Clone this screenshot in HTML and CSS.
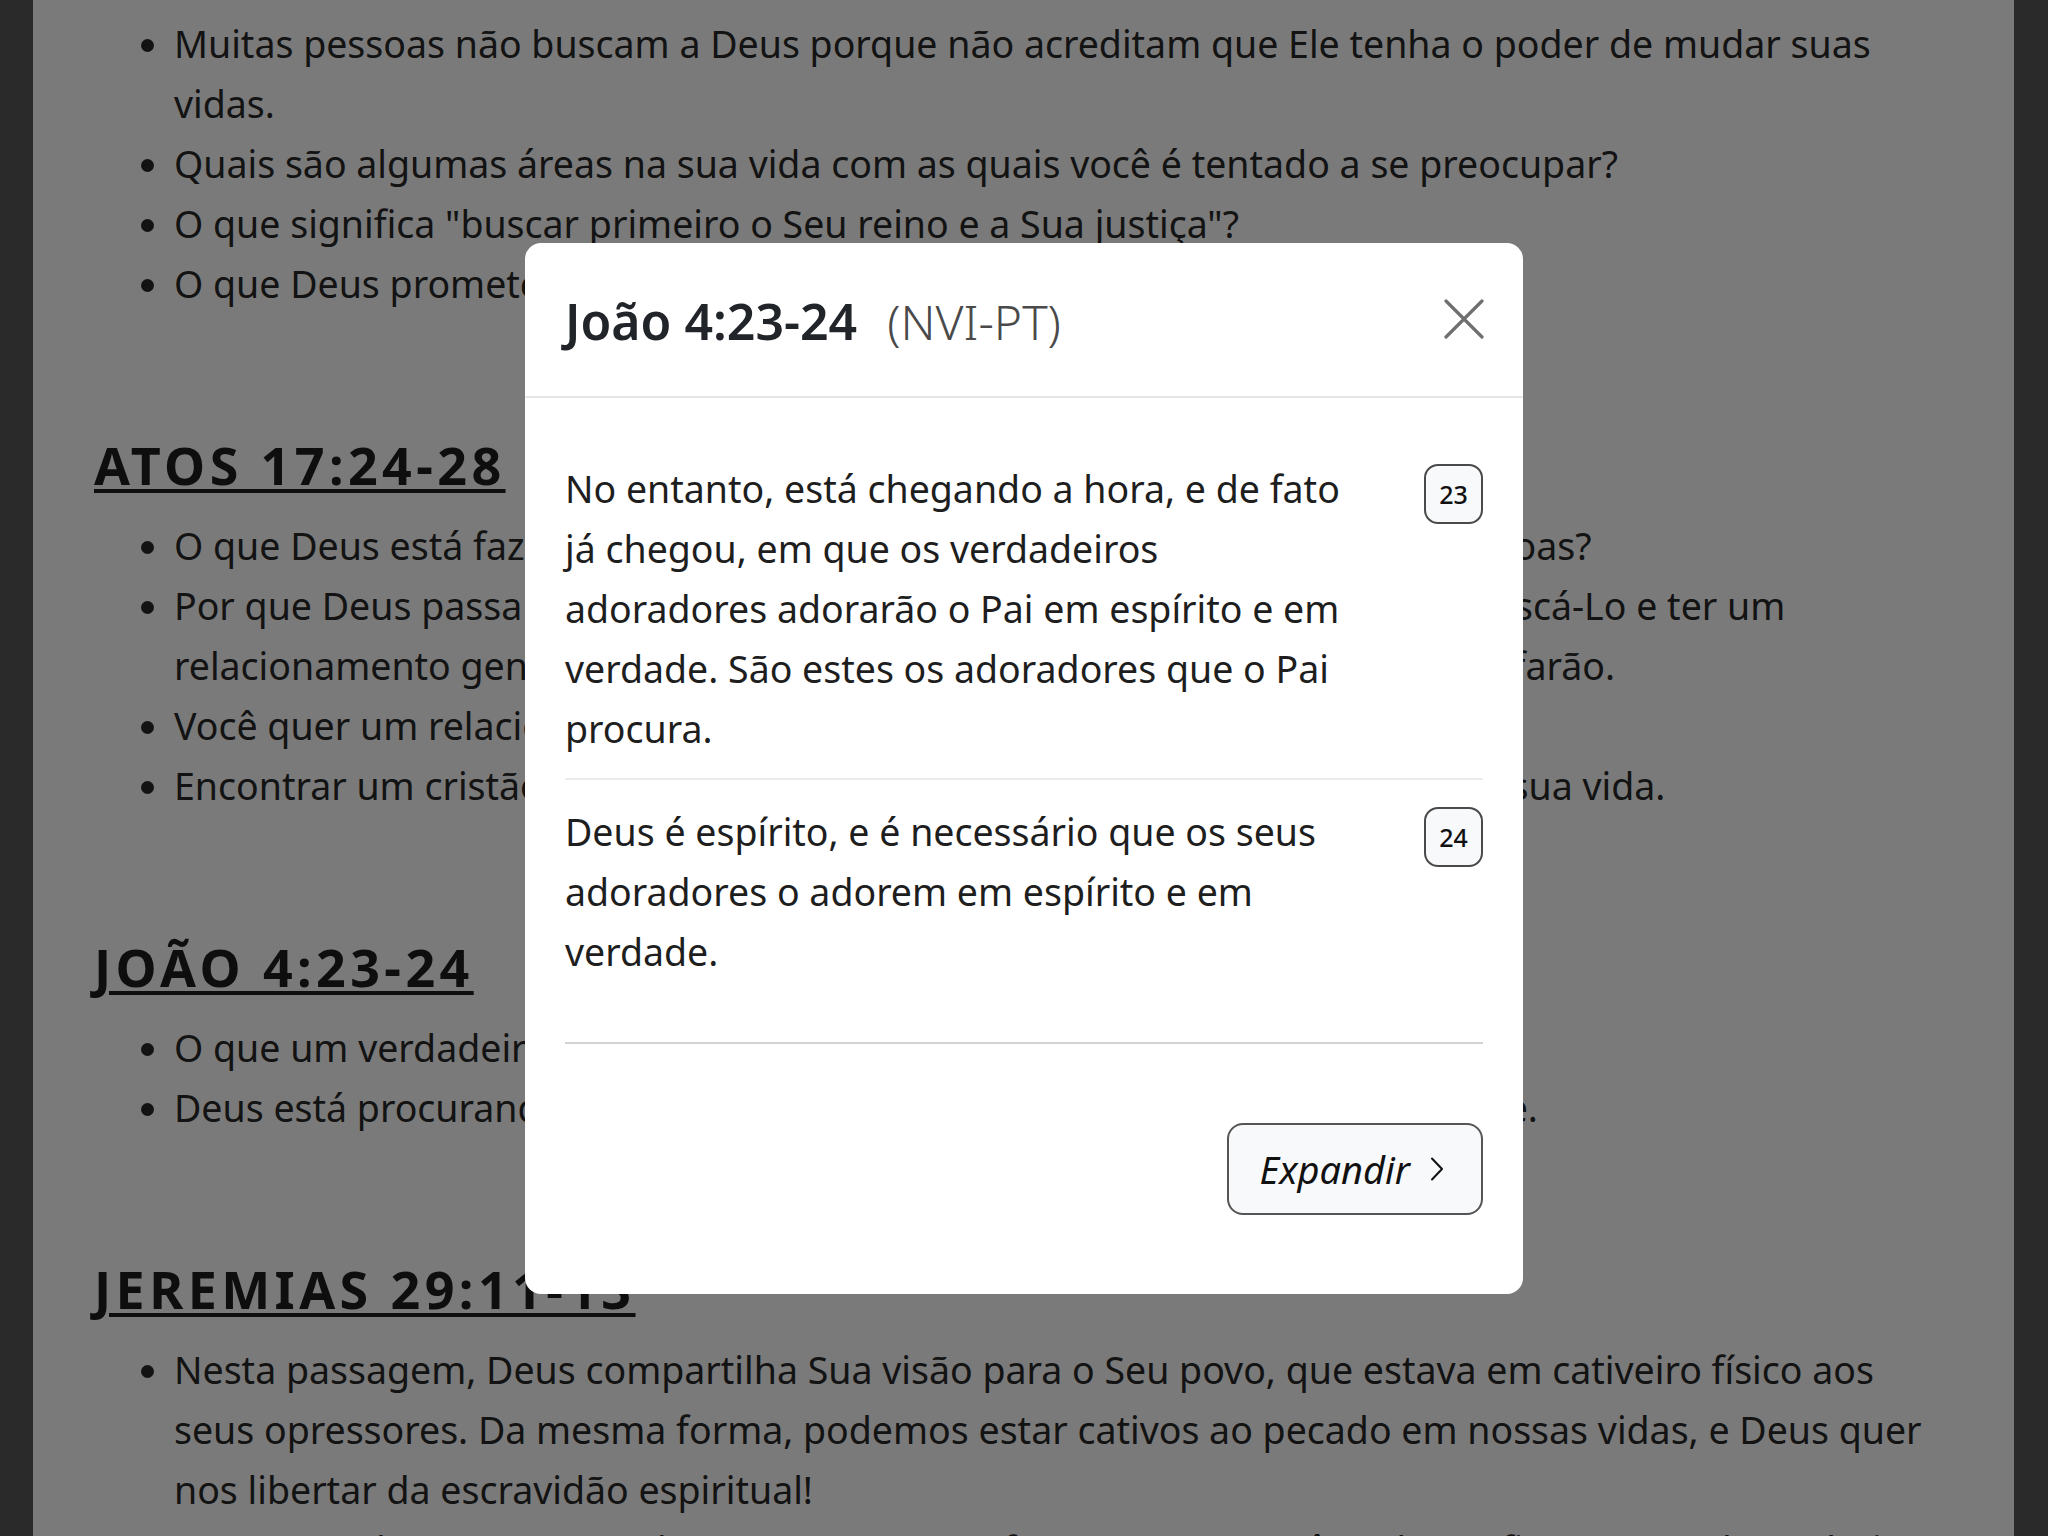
FILE: index.html
```html
<!DOCTYPE html>
<html lang="pt">
<head>
<meta charset="utf-8">
<title>João 4:23-24</title>
<link rel="stylesheet" href="styles.css">
</head>
<body>
<main class="page">
  <ul class="points">
    <li>Muitas pessoas não buscam a Deus porque não acreditam que Ele tenha o poder de mudar suas vidas.</li>
    <li>Quais são algumas áreas na sua vida com as quais você é tentado a se preocupar?</li>
    <li>O que significa "buscar primeiro o Seu reino e a Sua justiça"?</li>
    <li>O que Deus promete àqueles que O buscam?</li>
  </ul>

  <h2 class="ref">ATOS 17:24-28</h2>
  <ul class="points">
    <li>O que Deus está fazendo para se revelar e se aproximar de todas essas pessoas?</li>
    <li>Por que Deus passa muito tempo procurando convencer as pessoas para buscá-Lo e ter um relacionamento genuíno com Ele, mesmo sabendo que muitas pessoas não farão.</li>
    <li>Você quer um relacionamento pessoal com Deus?</li>
    <li>Encontrar um cristão experiente que possa ajudá-lo a crescer com Deus em sua vida.</li>
  </ul>

  <h2 class="ref">JOÃO 4:23-24</h2>
  <ul class="points">
    <li>O que um verdadeiro adorador faz?</li>
    <li>Deus está procurando verdadeiros adoradores. Você pode ser um deles, hoje.</li>
  </ul>

  <h2 class="ref">JEREMIAS 29:11-13</h2>
  <ul class="points">
    <li>Nesta passagem, Deus compartilha Sua visão para o Seu povo, que estava em cativeiro físico aos seus opressores. Da mesma forma, podemos estar cativos ao pecado em nossas vidas, e Deus quer nos libertar da escravidão espiritual!</li>
    <li>Deus tem planos para nos dar esperança e um futuro. Como você pode confiar nesses planos hoje?</li>
  </ul>
</main>

<div class="backdrop">
  <section class="modal" role="dialog" aria-label="João 4:23-24">
    <header class="modal-header">
      <h5 class="modal-title">João 4:23-24<span class="version">(NVI-PT)</span></h5>
      <button class="close" aria-label="Fechar">
        <svg width="40" height="40" viewBox="0 0 40 40"><path d="M2 2 L38 38 M38 2 L2 38" stroke="#6f6f6f" stroke-width="3.2" fill="none" stroke-linecap="round"/></svg>
      </button>
    </header>
    <div class="modal-body">
      <div class="verses">
        <div class="verse">
          <p class="verse-text">No entanto, está chegando a hora, e de fato já chegou, em que os verdadeiros adoradores adorarão o Pai em espírito e em verdade. São estes os adoradores que o Pai procura.</p>
          <span class="verse-num">23</span>
        </div>
        <div class="verse">
          <p class="verse-text">Deus é espírito, e é necessário que os seus adoradores o adorem em espírito e em verdade.</p>
          <span class="verse-num">24</span>
        </div>
      </div>
    </div>
    <footer class="modal-footer">
      <button class="expand">Expandir
        <svg width="14" height="24" viewBox="0 0 14 24"><path d="M2 1.5 L12 12 L2 22.5" stroke="#111" stroke-width="2" fill="none" stroke-linecap="round" stroke-linejoin="round"/></svg>
      </button>
    </footer>
  </section>
</div>
</body>
</html>
```

FILE: styles.css
```css
html, body {
  margin: 0;
  padding: 0;
}
body {
  background: #585858;
  font-family: "Noto Sans", "Open Sans", sans-serif;
  height: 1536px;
  overflow: hidden;
}
.page {
  margin: 0 34px 0 33px;
  background: #ffffff;
  padding: 14px 61px 200px;
  color: #282828;
  min-height: 1536px;
  box-sizing: border-box;
}
.points {
  margin: 0;
  padding-left: 80px;
  font-size: 37.5px;
  line-height: 60px;
}
.ref {
  margin: 120px 0 20px;
  font-size: 52px;
  line-height: 62px;
  font-weight: 700;
  letter-spacing: 4.4px;
  color: #1f1f1f;
  text-decoration: underline;
  text-decoration-thickness: 4px;
  text-underline-offset: 4px;
}
.backdrop {
  position: fixed;
  inset: 0;
  background: rgba(0, 0, 0, 0.52);
  display: flex;
  align-items: center;
  justify-content: center;
}
.modal {
  width: 998px;
  background: #fff;
  border-radius: 16px;
  color: #212529;
}
.modal-header {
  height: 155px;
  box-sizing: border-box;
  border-bottom: 2px solid #e6e6e6;
  display: flex;
  align-items: center;
  justify-content: space-between;
  padding: 4px 39px 0 40px;
}
.modal-title {
  margin: 0;
  font-size: 50px;
  line-height: 62px;
  font-weight: 600;
  color: #212529;
}
.version {
  margin-left: 30px;
  font-size: 48px;
  font-weight: 300;
  color: #4a4a4a;
}
.close {
  border: 0;
  background: transparent;
  padding: 0;
  width: 40px;
  height: 40px;
  display: flex;
  margin-top: -4px;
}
.modal-body {
  padding: 40px 40px 0;
}
.verses {
  border-bottom: 2px solid #d2d2d2;
}
.verse {
  display: flex;
  align-items: flex-start;
  gap: 68px;
  padding: 21px 0 19px;
  border-bottom: 2px solid #ebebeb;
}
.verse:last-child {
  border-bottom: 0;
  padding-top: 22px;
  padding-bottom: 60px;
}
.verse-text {
  flex: 1;
  margin: 0;
  font-size: 37.5px;
  line-height: 60px;
  color: #1e1e1e;
}
.verse-num {
  flex: none;
  margin-top: 5px;
  width: 59px;
  height: 60px;
  box-sizing: border-box;
  border: 2px solid #4a4a4a;
  border-radius: 14px;
  background: #f8f9fa;
  display: flex;
  align-items: center;
  justify-content: center;
  font-size: 25px;
  font-weight: 500;
  color: #111;
}
.modal-footer {
  display: flex;
  justify-content: flex-end;
  padding: 79px 40px 79px;
}
.expand {
  height: 92px;
  box-sizing: border-box;
  border: 2px solid #555;
  border-radius: 16px;
  background: #f8f9fa;
  padding: 0 37px 0 31px;
  display: flex;
  align-items: center;
  gap: 20px;
  font-family: "Noto Sans", "Open Sans", sans-serif;
  font-style: italic;
  font-size: 38px;
  color: #111;
}
```
